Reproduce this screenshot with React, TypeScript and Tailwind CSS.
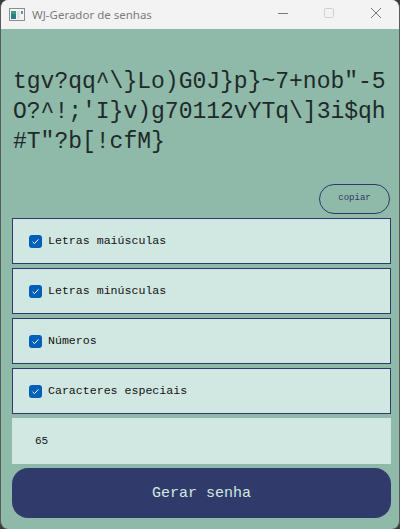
import { useState } from 'react';

const password = ['tgv?qq^\\}Lo)G0J}p}~7+nob"-5', "O?^!;'I}v)g70112vYTq\\]3i$qh", '#T"?b[!cfM}'];

const options = ['Letras maiúsculas', 'Letras minúsculas', 'Números', 'Caracteres especiais'];

function CheckBox({ checked }: { checked: boolean }) {
  return (
    <span className="flex h-[13px] w-[13px] items-center justify-center rounded-[3px] bg-[#005fb8]">
      {checked && (
        <svg width="9" height="9" viewBox="0 0 9 9">
          <path d="M1.6 4.8 L3.5 6.6 L7.4 2.4" stroke="#ffffff" strokeWidth="1" fill="none" />
        </svg>
      )}
    </span>
  );
}

export default function App() {
  const [checks, setChecks] = useState([true, true, true, true]);
  const mono = { fontFamily: '"Liberation Mono", "DejaVu Sans Mono", monospace' };

  return (
    <div className="h-[529px] w-[400px] bg-[#3b3b3b]">
      <div className="flex h-[529px] w-[400px] flex-col overflow-hidden rounded-[8px] border-l border-r border-[#5a5a5a] bg-[#8fb9a8]">
        {/* title bar */}
        <div className="flex h-[29px] shrink-0 items-center bg-[#f3f3f3]">
          <svg width="16" height="14" viewBox="0 0 16 14" className="ml-[8px]">
            <rect x="0.5" y="0.5" width="15" height="12" fill="#f4f4f4" stroke="#8c8c8c" />
            <rect x="2" y="3" width="5" height="8" fill="#2f7a8a" />
            <rect x="2" y="3" width="5" height="3" fill="#3d9c7a" />
            <rect x="8" y="3" width="3" height="8" fill="#d9e4ea" />
            <rect x="12" y="3" width="2" height="3" fill="#6d8fb3" />
          </svg>
          <span className="ml-[7px] text-[11.5px] text-[#7c7c7c]" style={{ fontFamily: '"Noto Sans", "Open Sans", sans-serif' }}>
            WJ-Gerador de senhas
          </span>
          <div className="ml-auto flex items-center">
            <svg width="46" height="29" viewBox="0 0 46 29">
              <path d="M17 13.5 H27" stroke="#7a7a7a" strokeWidth="1" />
            </svg>
            <svg width="46" height="29" viewBox="0 0 46 29">
              <rect x="17.5" y="8.5" width="9" height="9" rx="1" fill="none" stroke="#cfcfcf" />
            </svg>
            <svg width="46" height="29" viewBox="0 0 46 29">
              <path d="M18 8 L28 18 M28 8 L18 18" stroke="#7a7a7a" strokeWidth="1" />
            </svg>
          </div>
        </div>

        {/* password */}
        <div className="mt-[38px] pl-[12px] text-[23px] leading-[30px] text-[#1e2a2a]" style={mono}>
          {password.map((line, i) => (
            <div key={i} className="whitespace-pre">
              {line}
            </div>
          ))}
        </div>

        <div className="mt-[27px] flex justify-end pr-[9px]">
          <button
            className="flex h-[30px] w-[71px] items-center justify-center rounded-full border border-[#2f3a6b] text-[9px] text-[#2f3a6b]"
            style={mono}
          >
            copiar
          </button>
        </div>

        <div className="ml-[11px] mt-[4px] flex w-[379px] flex-col gap-[4px]">
          {options.map((label, i) => (
            <label
              key={label}
              className="flex h-[46px] items-center gap-[6px] border border-[#2f3a6b] bg-[#d1e8e2] pl-[16px]"
              onClick={() => setChecks(checks.map((c, j) => (j === i ? !c : c)))}
            >
              <CheckBox checked={checks[i]} />
              <span className="text-[11.6px] text-[#111111]" style={mono}>
                {label}
              </span>
            </label>
          ))}
          <div className="flex h-[46px] items-center bg-[#d1e8e2] pl-[23px]">
            <span className="text-[11px] text-[#111111]" style={mono}>
              65
            </span>
          </div>
          <button
            className="flex h-[50px] items-center justify-center rounded-[16px] bg-[#313b6b] pt-[3px] text-[15px] text-[#d1e8e2]"
            style={mono}
          >
            Gerar senha
          </button>
        </div>
      </div>
    </div>
  );
}
